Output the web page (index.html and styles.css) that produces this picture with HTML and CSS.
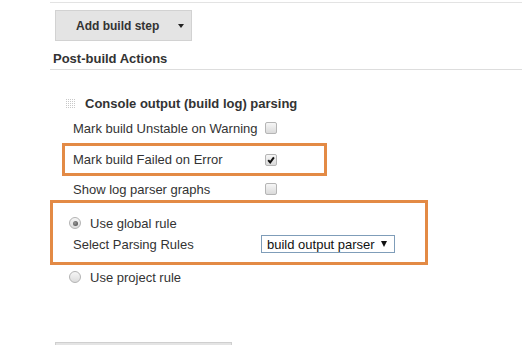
FILE: index.html
```html
<!DOCTYPE html>
<html>
<head>
<meta charset="utf-8">
<link rel="stylesheet" href="styles.css">
</head>
<body>
<div class="page">
  <div class="top-rule"></div>
  <div class="btn btn-add"><span>Add build step</span><span class="caret"></span></div>
  <h2 class="section-title">Post-build Actions</h2>
  <div class="plugin">
    <div class="plugin-head"><span class="grip"></span><span class="plugin-name">Console output (build log) parsing</span></div>
    <div class="opt-row r1"><span class="lbl">Mark build Unstable on Warning</span><span class="cb"></span></div>
    <div class="opt-row r2 hl"><span class="lbl">Mark build Failed on Error</span><span class="cb"><svg class="tick" viewBox="0 0 12 12" width="12" height="12"><path d="M3.2 6.2 L5.2 8.4 L8.9 3.4" fill="none" stroke="#111" stroke-width="2"/></svg></span></div>
    <div class="opt-row r3"><span class="lbl">Show log parser graphs</span><span class="cb"></span></div>
    <div class="rule-group">
      <div class="radio-row"><span class="radio on"></span><span class="radio-lbl">Use global rule</span></div>
      <div class="select-row"><span class="sel-lbl">Select Parsing Rules</span><span class="select"><span>build output parser</span><span class="sel-caret"></span></span></div>
    </div>
    <div class="radio-row project"><span class="radio"></span><span class="radio-lbl">Use project rule</span></div>
  </div>
  <div class="btn btn-bottom"></div>
</div>
</body>
</html>
```
FILE: styles.css
```css
html, body {
  margin: 0;
  padding: 0;
  overflow: hidden;
  background: #fff;
}
body {
  font-family: "Liberation Sans", Arial, sans-serif;
  font-size: 13px;
  line-height: 15px;
  color: #333;
}
.top-rule {
  margin: 2px 0 0 50px;
  height: 0;
  border-top: 1px solid #e3e3e3;
}
.btn {
  box-sizing: border-box;
  border: 1px solid #d2d2d2;
  background: #e4e4e4;
}
.btn-add {
  margin: 7px 0 0 55px;
  width: 137px;
  height: 31px;
  display: flex;
  align-items: center;
  padding: 1px 0 0 20px;
  font-size: 12px;
  font-weight: bold;
  color: #333;
}
.caret {
  margin-left: 19px;
  width: 0;
  height: 0;
  border-left: 3px solid transparent;
  border-right: 3px solid transparent;
  border-top: 4px solid #222;
}
.section-title {
  margin: 10px 0 0 50px;
  padding: 0 0 3px 3px;
  font-size: 13px;
  line-height: 15px;
  font-weight: bold;
  color: #333;
  border-bottom: 1px solid #ddd;
}
.plugin-head {
  margin-top: 26px;
  height: 15px;
  display: flex;
  align-items: center;
  padding-left: 65px;
}
.grip {
  width: 11px;
  height: 11px;
  background-image:
    linear-gradient(90deg, #fff 1px, transparent 1px),
    linear-gradient(#fff 1px, #c8c8c8 1px);
  background-size: 2px 2px, 2px 2px;
}
.plugin-name {
  margin-left: 9px;
  font-weight: bold;
  color: #333;
}
.opt-row {
  display: grid;
  grid-template-columns: 192px 12px;
  align-items: center;
  margin-left: 63px;
  width: 263px;
  box-sizing: border-box;
  padding-left: 10px;
}
.r1 { height: 32px; margin-top: 1px; }
.r2 { height: 31px; }
.r3 { height: 28px; }
.hl {
  outline: 3px solid #e38a45;
  outline-offset: -2px;
}
.cb {
  width: 12px;
  height: 12px;
  box-sizing: border-box;
  border: 1px solid #b5b5b5;
  border-radius: 2px;
  background: linear-gradient(#f6f6f6, #dadada);
  position: relative;
}
.tick {
  position: absolute;
  left: -1px;
  top: -1px;
}
.rule-group {
  margin-left: 53px;
  width: 372px;
  height: 59px;
  box-sizing: border-box;
  padding-top: 10px;
  outline: 3px solid #e38a45;
}
.radio-row {
  height: 20px;
  display: flex;
  align-items: center;
  padding-left: 16px;
}
.radio {
  width: 12px;
  height: 12px;
  box-sizing: border-box;
  border-radius: 50%;
  border: 1px solid #b3b3b3;
  background: linear-gradient(#f6f6f6, #dcdcdc);
  position: relative;
}
.radio.on::after {
  content: "";
  position: absolute;
  left: 2.5px;
  top: 2.5px;
  width: 5px;
  height: 5px;
  border-radius: 50%;
  background: radial-gradient(circle at 40% 40%, #999, #444);
}
.radio-lbl {
  margin-left: 9px;
}
.select-row {
  height: 22px;
  display: flex;
  align-items: center;
  padding-left: 20px;
}
.sel-lbl {
  width: 188px;
}
.select {
  width: 134px;
  height: 18px;
  box-sizing: border-box;
  border: 1px solid #7f9db9;
  display: flex;
  align-items: center;
  padding-left: 5px;
  color: #111;
  background: #fff;
}
.sel-caret {
  margin-left: auto;
  margin-right: 7px;
  width: 0;
  height: 0;
  border-left: 3px solid transparent;
  border-right: 3px solid transparent;
  border-top: 6px solid #111;
}
.radio-row.project {
  margin-left: 53px;
  height: 30px;
}
.btn-bottom {
  margin: 50px 0 0 55px;
  width: 177px;
  height: 20px;
  border-color: #cfcfcf;
}
```
